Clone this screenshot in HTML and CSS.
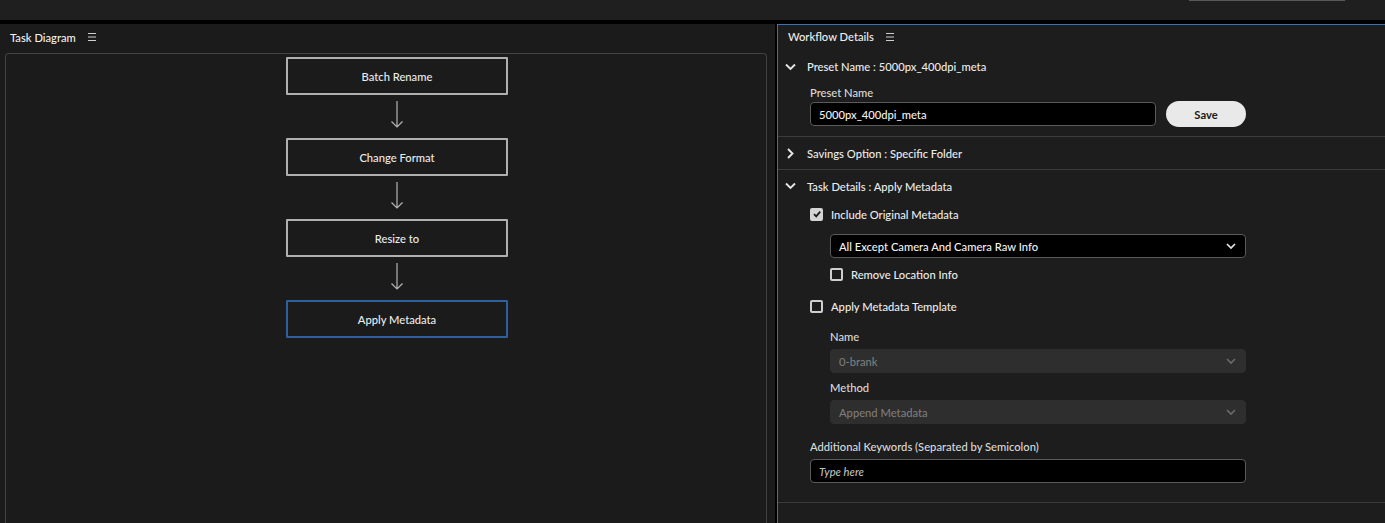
FILE: index.html
```html
<!DOCTYPE html>
<html>
<head>
<meta charset="utf-8">
<link rel="stylesheet" href="styles.css">
</head>
<body>
<div class="topbar">
  <div class="top-field"></div>
</div>
<div class="main">
  <section class="left">
    <div class="panel-head">
      <span class="panel-title">Task Diagram</span>
      <svg class="menu-icon" width="8" height="8" viewBox="0 0 8 8"><path d="M0 0.5H8M0 4H8M0 7.5H8" stroke="#cfcfcf" stroke-width="1"/></svg>
    </div>
    <div class="diagram">
      <div class="flow">
        <div class="node">Batch Rename</div>
        <svg class="arrow" width="14" height="28" viewBox="0 0 14 28"><path d="M7 0V26M1.5 20.5L7 26L12.5 20.5" fill="none" stroke="#b5b5b5" stroke-width="1.2"/></svg>
        <div class="node">Change Format</div>
        <svg class="arrow" width="14" height="28" viewBox="0 0 14 28"><path d="M7 0V26M1.5 20.5L7 26L12.5 20.5" fill="none" stroke="#b5b5b5" stroke-width="1.2"/></svg>
        <div class="node">Resize to</div>
        <svg class="arrow" width="14" height="28" viewBox="0 0 14 28"><path d="M7 0V26M1.5 20.5L7 26L12.5 20.5" fill="none" stroke="#b5b5b5" stroke-width="1.2"/></svg>
        <div class="node active">Apply Metadata</div>
      </div>
    </div>
  </section>
  <section class="right">
    <div class="panel-head rhead">
      <span class="panel-title">Workflow Details</span>
      <svg class="menu-icon" width="8" height="8" viewBox="0 0 8 8"><path d="M0 0.5H8M0 4H8M0 7.5H8" stroke="#cfcfcf" stroke-width="1"/></svg>
    </div>

    <div class="section">
      <div class="sec-head first">
        <svg class="chev" width="11" height="8" viewBox="0 0 11 8"><path d="M1 1.5L5.5 6L10 1.5" fill="none" stroke="#e6e6e6" stroke-width="1.9"/></svg>
        <span>Preset Name : 5000px_400dpi_meta</span>
      </div>
      <div class="sec-body preset">
        <div class="label">Preset Name</div>
        <div class="row">
          <div class="input name-input">5000px_400dpi_meta</div>
          <button class="save">Save</button>
        </div>
      </div>
    </div>

    <div class="section">
      <div class="sec-head">
        <svg class="chev" width="11" height="11" viewBox="0 0 11 11"><path d="M3 1L7.5 5.5L3 10" fill="none" stroke="#e6e6e6" stroke-width="1.9"/></svg>
        <span>Savings Option : Specific Folder</span>
      </div>
    </div>

    <div class="section">
      <div class="sec-head">
        <svg class="chev" width="11" height="8" viewBox="0 0 11 8"><path d="M1 1.5L5.5 6L10 1.5" fill="none" stroke="#e6e6e6" stroke-width="1.9"/></svg>
        <span>Task Details : Apply Metadata</span>
      </div>
      <div class="sec-body task">
        <label class="check">
          <span class="box checked"><svg width="10" height="10" viewBox="0 0 10 10"><path d="M2 5.2L4.2 7.4L8.2 2.6" fill="none" stroke="#1b1b1b" stroke-width="1.8"/></svg></span>
          <span>Include Original Metadata</span>
        </label>
        <div class="indent">
          <div class="select">
            <span>All Except Camera And Camera Raw Info</span>
            <svg width="12" height="12" viewBox="0 0 12 12"><path d="M2 4L6 8L10 4" fill="none" stroke="#e6e6e6" stroke-width="1.7"/></svg>
          </div>
          <label class="check sub">
            <span class="box"></span>
            <span>Remove Location Info</span>
          </label>
        </div>
        <label class="check tmpl">
          <span class="box"></span>
          <span>Apply Metadata Template</span>
        </label>
        <div class="indent fields">
          <div class="label">Name</div>
          <div class="select disabled">
            <span>0-brank</span>
            <svg width="12" height="12" viewBox="0 0 12 12"><path d="M2 4L6 8L10 4" fill="none" stroke="#6a6a6a" stroke-width="1.7"/></svg>
          </div>
          <div class="label method">Method</div>
          <div class="select disabled">
            <span>Append Metadata</span>
            <svg width="12" height="12" viewBox="0 0 12 12"><path d="M2 4L6 8L10 4" fill="none" stroke="#6a6a6a" stroke-width="1.7"/></svg>
          </div>
        </div>
        <div class="label kw">Additional Keywords (Separated by Semicolon)</div>
        <div class="input kw-input"><span class="ph">Type here</span></div>
      </div>
    </div>
  </section>
</div>
</body>
</html>
```

FILE: styles.css
```css
* { box-sizing: border-box; }
html, body {
  margin: 0;
  padding: 0;
  height: 523px;
  overflow: hidden;
  background: #000;
  font-family: Lato, "Open Sans", sans-serif;
  font-size: 11.2px;
  font-weight: 500;
  color: #e3e3e3;
}
.topbar {
  height: 20px;
  background: #1f1f1f;
  position: relative;
}
.top-field {
  position: absolute;
  left: 1189px;
  top: 0;
  width: 156px;
  height: 1px;
  background: #5a5a5a;
}
.main {
  display: flex;
  margin-top: 4px;
  height: 499px;
  gap: 2px;
}
.left {
  width: 775px;
  background: #1b1b1b;
  display: flex;
  flex-direction: column;
}
.panel-head {
  height: 29px;
  display: flex;
  align-items: center;
  padding-left: 10px;
  padding-bottom: 3px;
  flex: none;
}
.panel-title {
  color: #f0f0f0;
}
.menu-icon {
  margin-left: 12px;
}
.diagram {
  flex: 1;
  margin: 0 8px 0 5px;
  border: 1px solid #424242;
  border-bottom: none;
  border-radius: 4px 4px 0 0;
}
.flow {
  width: 222px;
  margin-left: 280px;
  margin-top: 3px;
  display: flex;
  flex-direction: column;
  align-items: center;
}
.node {
  width: 222px;
  height: 38px;
  border: 2px solid #b0b0b0;
  border-radius: 1px;
  display: flex;
  align-items: center;
  justify-content: center;
  color: #ececec;
}
.node.active {
  border-color: #2e5f9f;
}
.arrow {
  display: block;
  margin: 6px 0 9px;
}
.right {
  flex: 1;
  background: #1d1d1d;
  border-top: 1px solid #3a70b8;
  border-left: 1px solid #3a70b8;
}
.rhead {
  height: 25px;
  padding-bottom: 2px;
  padding-top: 0;
}
.section {
  border-bottom: 1px solid #3c3c3c;
}
.sec-head {
  height: 32px;
  display: flex;
  align-items: center;
  padding-left: 7px;
  color: #ececec;
}
.sec-head.first { height: 34px; padding-bottom: 1px; }
.chev {
  margin-right: 11px;
  flex: none;
}
.sec-body {
  padding-left: 32px;
}
.preset {
  padding-top: 1px;
  padding-bottom: 9px;
}
.label {
  color: #dadada;
  height: 16px;
  line-height: 16px;
}
.row {
  display: flex;
  align-items: center;
  gap: 10px;
  margin-top: 0;
}
.input {
  height: 24px;
  background: #000;
  border: 1px solid #5a5a5a;
  border-radius: 4px;
  display: flex;
  align-items: center;
  padding-left: 8px;
  color: #f2f2f2;
}
.name-input { width: 346px; }
.save {
  width: 80px;
  height: 26px;
  border: none;
  border-radius: 13px;
  background: #e9e9e9;
  color: #1a1a1a;
  font-family: Lato, "Open Sans", sans-serif;
  font-weight: 700;
  font-size: 11.2px;
  padding: 0;
}
.task {
  padding-top: 4px;
  padding-bottom: 19px;
}
.check {
  display: flex;
  align-items: center;
  height: 16px;
  color: #ececec;
}
.box {
  width: 13px;
  height: 13px;
  border: 2px solid #cfcfcf;
  border-radius: 2px;
  margin-right: 8px;
  display: flex;
  align-items: center;
  justify-content: center;
  flex: none;
}
.box.checked {
  background: #d4d4d4;
  border-color: #d4d4d4;
}
.box svg { flex: none; }
.indent {
  padding-left: 20px;
  width: 436px;
}
.select {
  height: 24px;
  margin-top: 12px;
  background: #000;
  border: 1px solid #5a5a5a;
  border-radius: 4px;
  display: flex;
  align-items: center;
  justify-content: space-between;
  padding: 0 8px;
  color: #f2f2f2;
}
.check.sub { margin-top: 8px; }
.check.tmpl { margin-top: 16px; }
.fields { margin-top: 15px; }
.fields .select { margin-top: 4px; }
.select.disabled {
  background: #2e2e2e;
  border-color: #2e2e2e;
  color: #7c7c7c;
}
.method { margin-top: 7px; }
.kw { margin-top: 15px; }
.kw-input {
  width: 436px;
  margin-top: 4px;
}
.ph {
  font-style: italic;
  color: #bdbdbd;
}
```
